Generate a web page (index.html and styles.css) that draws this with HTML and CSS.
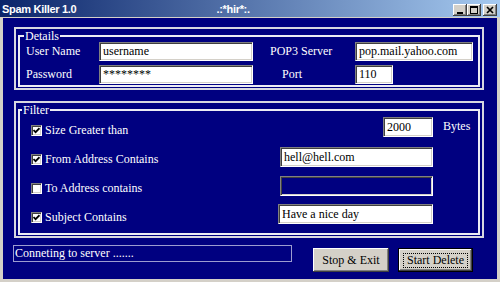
FILE: index.html
```html
<!DOCTYPE html>
<html>
<head>
<meta charset="utf-8">
<link rel="stylesheet" href="styles.css">
</head>
<body>
<div class="window">
  <div class="titlebar">
    <span class="title">Spam Killer 1.0</span>
    <span class="tag">.:*hir*:.</span>
    <div class="tbtns">
      <span class="tbtn"><svg width="14" height="12" viewBox="0 0 14 12"><rect x="4" y="8" width="6" height="2" fill="#000"/></svg></span>
      <span class="tbtn"><svg width="14" height="12" viewBox="0 0 14 12"><path d="M3 2h8v8H3z M4 4v5h6V4z" fill="#000" fill-rule="evenodd"/></svg></span>
      <span class="tbtn close"><svg width="14" height="12" viewBox="0 0 14 12"><path d="M4 3l6 6M10 3l-6 6" stroke="#000" stroke-width="1.7"/></svg></span>
    </div>
  </div>
  <div class="client">
    <div class="panel">
      <fieldset class="group">
        <legend class="legend details-legend">Details</legend>
        <div class="details-grid">
          <span class="lbl">User Name</span>
          <div class="field">username</div>
          <span class="lbl pop">POP3 Server</span>
          <div class="field w118">pop.mail.yahoo.com</div>
          <span class="lbl">Password</span>
          <div class="field">********</div>
          <span class="lbl port">Port</span>
          <div class="field w38">110</div>
        </div>
      </fieldset>
    </div>
    <div class="panel filter-panel">
      <fieldset class="group">
        <legend class="legend filter-legend">Filter</legend>
        <div class="filter-grid">
          <div class="check-row"><span class="cb"><svg width="7" height="7" viewBox="0 0 7 7"><polyline points="0.5,3 2.6,5.2 6.5,1.2" fill="none" stroke="#000" stroke-width="1.8"/></svg></span><span>Size Greater than</span></div>
          <div class="field small">2000</div>
          <span class="unit">Bytes</span>

          <div class="check-row"><span class="cb"><svg width="7" height="7" viewBox="0 0 7 7"><polyline points="0.5,3 2.6,5.2 6.5,1.2" fill="none" stroke="#000" stroke-width="1.8"/></svg></span><span>From Address Contains</span></div>
          <div class="field">hell@hell.com</div>
          <span></span>

          <div class="check-row"><span class="cb"></span><span>To Address contains</span></div>
          <div class="field disabled"></div>
          <span></span>

          <div class="check-row"><span class="cb"><svg width="7" height="7" viewBox="0 0 7 7"><polyline points="0.5,3 2.6,5.2 6.5,1.2" fill="none" stroke="#000" stroke-width="1.8"/></svg></span><span>Subject Contains</span></div>
          <div class="field wider">Have a nice day</div>
          <span></span>
        </div>
      </fieldset>
    </div>
    <div class="bottom">
      <div class="status">Conneting to server .......</div>
      <div class="btn stop">Stop &amp; Exit</div>
      <div class="btn default"><span class="focus">Start Delete</span></div>
    </div>
  </div>
</div>
</body>
</html>
```
FILE: styles.css
```css
* { box-sizing: border-box; }
html, body { margin: 0; padding: 0; }
body {
  width: 500px;
  height: 282px;
  overflow: hidden;
  font-family: "Liberation Serif", "Times New Roman", serif;
  font-size: 12px;
}
.window {
  width: 500px;
  height: 282px;
  display: flex;
  flex-direction: column;
  background: #d4d0c8;
}
.titlebar {
  height: 17px;
  flex: none;
  display: flex;
  align-items: center;
  background: linear-gradient(to right, #0a246a, #a6caf0);
  color: #fff;
  font: bold 11px "Liberation Sans", Arial, sans-serif;
  letter-spacing: -0.3px;
  padding-left: 2px;
}
.tag { margin-left: 140px; }
.tbtns {
  margin-left: auto;
  margin-right: 3px;
  display: flex;
  align-self: flex-start;
  margin-top: 4px;
}
.tbtn {
  width: 14px;
  height: 12px;
  background: #d4d0c8;
  box-shadow: inset -1px -1px #404040, inset 1px 1px #fff, inset -2px -2px #808080;
  display: flex;
}
.tbtn.close { margin-left: 2px; }

.client {
  flex: 1;
  margin: 1px 3px 3px 3px;
  background: #000080;
  color: #fff;
  padding: 9px 13px 0 11px;
  display: flex;
  flex-direction: column;
}
.panel {
  border: 2px solid #d8d8e0;
  padding: 1px 2px 1px 2px;
}
.filter-panel { margin-top: 11px; }
.group {
  margin: 0;
  padding: 0 0 1px 0;
  border: 2px solid #ececf4;
  min-width: 0;
}
.legend {
  padding: 0 1px;
  line-height: 12px;
  font-size: 12px;
}
.details-legend { margin-left: 4px; }
.filter-legend { margin-left: 2px; }

.details-grid {
  display: grid;
  grid-template-columns: 73px 154px 102px auto;
  grid-auto-rows: 19px;
  row-gap: 4px;
  align-items: center;
  padding-left: 6px;
}
.lbl { white-space: nowrap; }
.lbl.pop { padding-left: 17px; }
.lbl.port { padding-left: 29px; }

.field {
  height: 19px;
  background: #fff;
  color: #000;
  padding-left: 3px;
  line-height: 17px;
  white-space: nowrap;
  border: 1px solid;
  border-color: #808080 #fff #fff #808080;
  box-shadow: inset 1px 1px #404040, inset -1px -1px #d4d0c8;
}
.w118 { width: 118px; }
.w38 { width: 38px; }

.filter-grid {
  display: grid;
  grid-template-columns: 1fr 153px 45px;
  grid-auto-rows: 29px;
  align-items: center;
  padding-left: 11px;
}
.filter-grid .field {
  height: 20px;
  line-height: 18px;
  margin-bottom: 6px;
}
.filter-grid .field.small {
  width: 50px;
  justify-self: end;
  margin-bottom: 8px;
}
.filter-grid .field.wider { margin-left: -2px; margin-bottom: 8px; }
.field.disabled { background: #000080; }
.unit { padding-left: 10px; margin-bottom: 8px; }

.check-row {
  display: flex;
  align-items: center;
  gap: 3px;
  white-space: nowrap;
}
.cb {
  width: 11px;
  height: 11px;
  flex: none;
  background: #fff;
  border: 1px solid;
  border-color: #808080 #fff #fff #808080;
  box-shadow: inset 1px 1px #404040, inset -1px -1px #d4d0c8;
  display: flex;
  align-items: center;
  justify-content: center;
}

.bottom {
  margin-top: 7px;
  display: flex;
  align-items: flex-start;
}
.status {
  width: 279px;
  height: 17px;
  margin-left: -1px;
  border: 1px solid #9c9cd0;
  padding-left: 1px;
  line-height: 15px;
  white-space: nowrap;
}
.btn {
  margin-top: 3px;
  height: 24px;
  background: #d4d0c8;
  color: #000;
  display: flex;
  align-items: center;
  justify-content: center;
  box-shadow: inset -1px -1px #404040, inset 1px 1px #fff, inset -2px -2px #808080;
  white-space: nowrap;
}
.btn.stop { width: 76px; margin-left: 21px; }
.btn.default {
  width: 75px;
  margin-left: 9px;
  border: 1px solid #000;
}
.focus {
  width: 65px;
  height: 15px;
  border: 1px dotted #000;
  display: flex;
  align-items: center;
  justify-content: center;
  line-height: 13px;
}
```
